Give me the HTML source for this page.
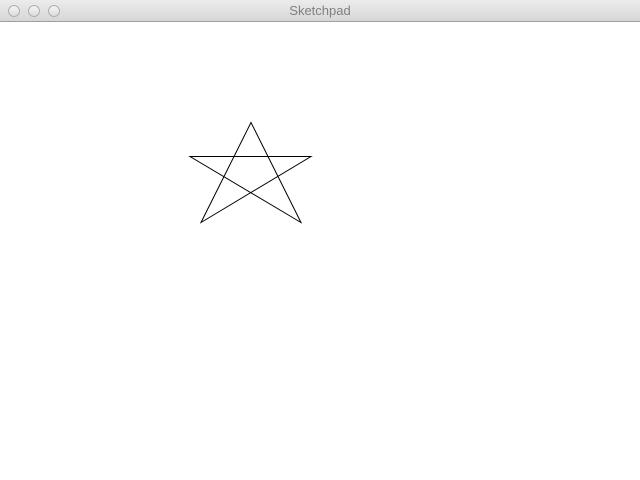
<!DOCTYPE html>
<html><head><style>
html,body{margin:0;padding:0;width:640px;height:480px;overflow:hidden;background:#fff;}
.bar{position:absolute;left:0;top:0;width:640px;height:21px;background:linear-gradient(#ececec,#d6d6d6);border-bottom:1px solid #a0a0a0;}
.c{position:absolute;top:5px;width:10px;height:10px;border-radius:50%;border:1px solid #b0b0b0;background:linear-gradient(#f4f4f4,#dcdcdc);}
.t{position:absolute;left:0;width:640px;top:3px;text-align:center;font:13px "Liberation Sans",sans-serif;color:#808080;}
svg{position:absolute;left:0;top:0;}
</style></head><body>
<div class="bar">
<div class="c" style="left:8px"></div><div class="c" style="left:28px"></div><div class="c" style="left:48px"></div>
<div class="t">Sketchpad</div>
</div>
<svg width="640" height="480"><polygon points="251,122.5 201,222.5 311,156.5 190,156.5 301,222.5" fill="none" stroke="#000" stroke-width="1"/></svg>
</body></html>
